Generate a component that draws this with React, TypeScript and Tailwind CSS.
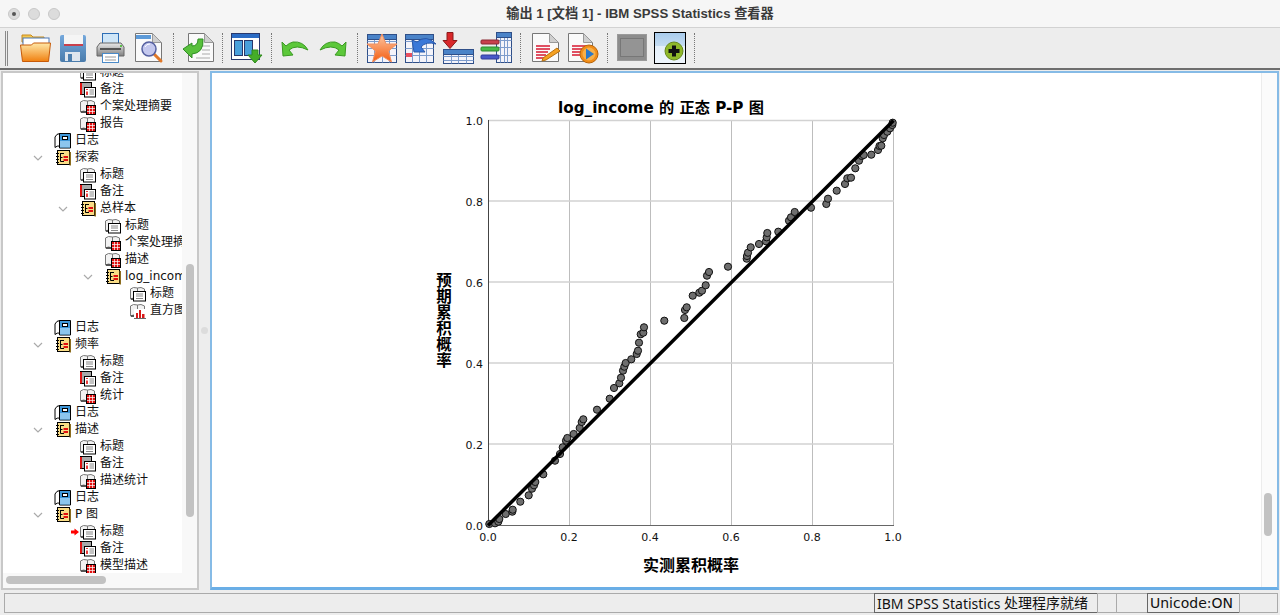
import type { ReactNode } from "react";

const cjk = "font-['DejaVu_Sans','Noto_Sans_CJK_SC',sans-serif]";

// scatter points of the P-P plot, in page pixels
const points: [number, number][] = [
  [489.3, 524], [495, 523.3], [498.3, 521.7], [499.3, 519], [505.7, 514], [512.3, 511.7], [512.7, 509.7],
  [520.3, 501.7], [528.7, 495.3], [532, 488.7], [534, 485.3], [535.3, 482], [543.3, 474.3], [555, 460.7],
  [560, 454], [562.7, 447.3], [566, 440.7], [567.3, 438], [573.7, 434], [579.7, 428], [581.7, 422],
  [583.3, 419.3], [597, 409.7], [609.7, 398.7], [614, 388], [619.3, 383.3], [621, 377.7], [623, 370.7],
  [624.3, 366.7], [625.7, 363], [631.3, 359.3], [636.7, 354], [638, 350.7], [639, 342.7], [640.7, 334.3],
  [643.3, 332.7], [644, 327.3], [664.3, 320.7], [684.3, 318], [685, 310], [686.7, 307.3], [692.7, 295.7],
  [699.3, 292.7], [702, 290.7], [705.7, 285.3], [707, 275.7], [709, 272], [728, 266.7], [746.7, 258.7],
  [747, 256], [748, 252.7], [750.7, 247.3], [759, 244], [766, 241.3], [766.7, 237.3], [767.3, 233],
  [778.3, 231.7], [789, 220.7], [791, 217.3], [794.7, 212], [811, 207.7], [826.3, 204], [828, 198.7],
  [836.7, 190.7], [845, 184], [847.3, 178.3], [851, 177.7], [855.3, 168.3], [859, 160.7], [861.7, 156],
  [863.7, 155], [871.3, 154.7], [878, 150], [879.5, 146], [881.3, 145.7], [882.7, 138.3], [884, 135],
  [887.3, 131.7], [890, 128.3], [892.3, 125], [892.7, 122.7],
];

type Kind = "log" | "folder" | "title" | "note" | "table" | "chart";

function TreeIcon({ kind }: { kind: Kind }) {
  if (kind === "log") {
    return (
      <svg className="shrink-0" width="18" height="17" viewBox="0 0 18 17">
        <path d="M1 5 Q2.500 1.500 6 1.500 V14 Q3 13.500 1 15.500Z" fill="#fff" stroke="#000" />
        <path d="M5.500 1.500 H16.500 V16 H5.500Z" fill="#3f97d8" stroke="#000" />
        <rect x="6" y="9" width="10" height="6.500" fill="#8cc6ee" />
        <rect x="8.500" y="4.500" width="5" height="3" fill="#fff" stroke="#000" />
      </svg>
    );
  }
  if (kind === "folder") {
    return (
      <svg className="shrink-0" width="18" height="17" viewBox="0 0 18 17">
        <rect x="3.500" y="1.500" width="12" height="14" fill="#f9dc86" stroke="#000" />
        <rect x="15.500" y="3" width="1.500" height="13.500" fill="#8c6d1f" />
        <path d="M2 4.500h3M2 7.500h3M2 10.500h3M2 13.500h3" stroke="#000" />
        <path d="M6.500 4V12.500M6.500 4.500h3.500M6.500 8.500h2M6.500 12.500h3.500" stroke="#000" fill="none" />
        <rect x="9.500" y="7" width="4.500" height="2" fill="#e01010" />
        <rect x="9.500" y="10" width="4.500" height="2" fill="#e01010" />
      </svg>
    );
  }
  const book = kind === "note" ? (
    <>
      <rect x="1.500" y="1.500" width="11" height="12" fill="#a8a8a8" stroke="#000" />
      <path d="M2 2V13.500" stroke="#e01010" strokeWidth="2" />
    </>
  ) : (
    <>
      <path d="M1.500 14V4Q4 1.500 8.500 3Q12 1.500 15.500 4V14Q12 12 8.500 14Q4 12 1.500 14Z" fill="#f2f2f2" stroke="#777" />
      <path d="M8.500 3V13" stroke="#777" />
      <path d="M2 14h6" stroke="#555" strokeWidth="2" />
    </>
  );
  return (
    <svg className="shrink-0" width="18" height="17" viewBox="0 0 18 17">
      {book}
      {kind === "title" && (
        <>
          <rect x="4.500" y="6.500" width="12" height="9.500" fill="#fff" stroke="#000" />
          <path d="M7 9h7M7 11h7M7 13.500h7" stroke="#888" />
        </>
      )}
      {kind === "note" && (
        <>
          <rect x="5.500" y="6.500" width="11" height="9.500" fill="#fff" stroke="#000" />
          <path d="M8 8v1M8 10.500v3.500" stroke="#e01010" strokeWidth="1.600" />
          <path d="M10.500 9h4.500M10.500 11h4.500M10.500 13h4.500" stroke="#888" />
        </>
      )}
      {kind === "table" && (
        <>
          <rect x="7.500" y="7.500" width="9" height="9" fill="#e01010" stroke="#000" />
          <path d="M10.500 8v8M13.500 8v8M8 10.500h8M8 13.500h8" stroke="#fff" strokeWidth="0.700" />
        </>
      )}
      {kind === "chart" && (
        <>
          <rect x="5" y="7" width="12" height="9.500" fill="#fff" />
          <path d="M7 11h2v5h-2zM10 8h2v8h-2zM13 12h2.500v4h-2.500z" fill="#d81818" />
          <path d="M5 16.500h12" stroke="#666" />
        </>
      )}
    </svg>
  );
}

const rows: { kind: Kind; label: string; pad: string; open?: boolean; current?: boolean }[] = [
  { kind: "title", label: "标题", pad: "pl-[79px]" },
  { kind: "note", label: "备注", pad: "pl-[79px]" },
  { kind: "table", label: "个案处理摘要", pad: "pl-[79px]" },
  { kind: "table", label: "报告", pad: "pl-[79px]" },
  { kind: "log", label: "日志", pad: "pl-[54px]" },
  { kind: "folder", label: "探索", pad: "pl-[54px]", open: true },
  { kind: "title", label: "标题", pad: "pl-[79px]" },
  { kind: "note", label: "备注", pad: "pl-[79px]" },
  { kind: "folder", label: "总样本", pad: "pl-[79px]", open: true },
  { kind: "title", label: "标题", pad: "pl-[104px]" },
  { kind: "table", label: "个案处理摘要", pad: "pl-[104px]" },
  { kind: "table", label: "描述", pad: "pl-[104px]" },
  { kind: "folder", label: "log_income", pad: "pl-[104px]", open: true },
  { kind: "title", label: "标题", pad: "pl-[129px]" },
  { kind: "chart", label: "直方图", pad: "pl-[129px]" },
  { kind: "log", label: "日志", pad: "pl-[54px]" },
  { kind: "folder", label: "频率", pad: "pl-[54px]", open: true },
  { kind: "title", label: "标题", pad: "pl-[79px]" },
  { kind: "note", label: "备注", pad: "pl-[79px]" },
  { kind: "table", label: "统计", pad: "pl-[79px]" },
  { kind: "log", label: "日志", pad: "pl-[54px]" },
  { kind: "folder", label: "描述", pad: "pl-[54px]", open: true },
  { kind: "title", label: "标题", pad: "pl-[79px]" },
  { kind: "note", label: "备注", pad: "pl-[79px]" },
  { kind: "table", label: "描述统计", pad: "pl-[79px]" },
  { kind: "log", label: "日志", pad: "pl-[54px]" },
  { kind: "folder", label: "P 图", pad: "pl-[54px]", open: true },
  { kind: "title", label: "标题", pad: "pl-[79px]", current: true },
  { kind: "note", label: "备注", pad: "pl-[79px]" },
  { kind: "table", label: "模型描述", pad: "pl-[79px]" },
];

function TreeRow({ row }: { row: (typeof rows)[number] }) {
  return (
    <div className={`relative flex h-[17px] w-[300px] items-center whitespace-nowrap text-[12px] leading-[17px] text-[#111] ${row.pad}`}>
      <span className="relative flex w-0 items-center">
        {row.open && (
          <svg className="absolute left-[-21px] top-[-3px]" width="10" height="6" viewBox="0 0 10 6">
            <path d="M1 1l4 4 4-4" fill="none" stroke="#aaa" strokeWidth="1.200" />
          </svg>
        )}
        {row.current && (
          <svg className="absolute left-[-8px] top-[-4px]" width="8" height="8" viewBox="0 0 8 8">
            <path d="M0 2.500h3.500V0.500L8 4 3.500 7.500V5.500H0Z" fill="#f00" />
          </svg>
        )}
      </span>
      <TreeIcon kind={row.kind} />
      <span className="ml-[3px]">{row.label}</span>
    </div>
  );
}

const Page = ({ x = 2, w = 26, h = 30 }: { x?: number; w?: number; h?: number }) => (
  <>
    <path d={`M${x + 0.5} 1.500h${w - 9}l9 9v${h - 10}h-${w}z`} fill="#fafafa" stroke="#777" />
    <path d={`M${x + w - 8.5} 1.500v9h9z`} fill="#cfcfcf" stroke="#999" />
  </>
);

const Grid = ({ x, y, w, h }: { x: number; y: number; w: number; h: number }) => {
  const lines = [];
  for (let i = 1; i < 4; i++) lines.push(<path key={`v${i}`} d={`M${x + Math.round((w * i) / 4)} ${y}v${h}`} stroke="#7d9ccc" />);
  for (let i = 1; i < 4; i++) lines.push(<path key={`h${i}`} d={`M${x} ${y + Math.round((h * i) / 4)}h${w}`} stroke="#7d9ccc" />);
  return (
    <>
      <rect x={x} y={y} width={w} height={h} fill="#f4f4fa" stroke="#2f4f88" />
      {lines}
      <rect x={x} y={y} width={w} height="5" fill="#4a83c8" stroke="#2f4f88" />
    </>
  );
};

const arrowPath = "M3 10L4 24L14 23L10 18Q17 12 29 18Q24 9 14 10Q10 11 7 14Z";

const tools: { ml: string; icon: ReactNode }[] = [
  {
    ml: "ml-[11px]",
    icon: (
      <svg width="32" height="32" viewBox="0 0 32 32">
        <defs>
          <linearGradient id="fo" x1="0" y1="0" x2="0" y2="1">
            <stop offset="0" stopColor="#ffe8a8" />
            <stop offset="1" stopColor="#f08010" />
          </linearGradient>
        </defs>
        <path d="M3 10V3h9l2 2h11v8z" fill="#f4c850" stroke="#c98a1a" />
        <rect x="4" y="6" width="26" height="10" fill="#fff" stroke="#4b78b8" />
        <path d="M1.500 13h11l2-2h17l-2 18.500H3.500z" fill="url(#fo)" stroke="#c75a08" />
      </svg>
    ),
  },
  {
    ml: "ml-[7px]",
    icon: (
      <svg width="32" height="32" viewBox="0 0 32 32">
        <defs>
          <linearGradient id="sv" x1="0" y1="0" x2="0" y2="1">
            <stop offset="0" stopColor="#74a8dc" />
            <stop offset="1" stopColor="#4a7cac" />
          </linearGradient>
        </defs>
        <rect x="2" y="3" width="26" height="27" rx="2" fill="url(#sv)" />
        <rect x="6" y="3" width="19" height="11" fill="#f5f5f5" />
        <rect x="6" y="12" width="19" height="2" fill="#c8404c" />
        <rect x="7" y="20" width="15" height="9" fill="#dfe6ee" />
        <rect x="10" y="22" width="4" height="7" fill="#4d7faf" />
      </svg>
    ),
  },
  {
    ml: "ml-[5px]",
    icon: (
      <svg width="32" height="32" viewBox="0 0 32 32">
        <defs>
          <linearGradient id="pr" x1="0" y1="0" x2="0" y2="1">
            <stop offset="0" stopColor="#eaeaea" />
            <stop offset="1" stopColor="#808080" />
          </linearGradient>
        </defs>
        <rect x="7.500" y="1.500" width="16" height="11" fill="#cfe6f8" stroke="#2d6db5" />
        <path d="M5 11h21l3 4v9H2v-9z" fill="url(#pr)" stroke="#666" />
        <rect x="5" y="16" width="21" height="2" fill="#555" />
        <rect x="25" y="13" width="2" height="2" fill="#5cc04a" />
        <rect x="7.500" y="21.500" width="16" height="9" fill="#fff" stroke="#4a8ac8" />
        <path d="M10 25h11M10 28h11" stroke="#999" />
      </svg>
    ),
  },
  {
    ml: "ml-[6px]",
    icon: (
      <svg width="32" height="32" viewBox="0 0 32 32">
        <Page x={2} w={26} h={29} />
        <rect x="3" y="3" width="15" height="4" fill="#5c9ad8" />
        <path d="M21 22l7 7" stroke="#e07828" strokeWidth="3" strokeLinecap="round" />
        <circle cx="16" cy="17" r="7" fill="#c4c8ee" stroke="#5560a0" strokeWidth="1.500" />
        <path d="M12 15a5 5 0 0 1 5-3" stroke="#fff" fill="none" />
      </svg>
    ),
  },
  {
    ml: "ml-[8px]",
    icon: (
      <svg width="32" height="32" viewBox="0 0 32 32">
        <Page x={6} w={25} h={29} />
        <path d="M18 14h10M20 18h8M20 22h8M14 26h14" stroke="#aaa" />
        <path d="M1 17l9-6v3q6 0 6-7h5q1 14-11 15v4z" fill="#58c03c" stroke="#2f8f24" />
      </svg>
    ),
  },
  {
    ml: "ml-[8px]",
    icon: (
      <svg width="32" height="32" viewBox="0 0 32 32">
        <rect x="0.500" y="1.500" width="28" height="26" fill="#fff" stroke="#28386c" />
        <rect x="1" y="2" width="27" height="4" fill="#2a6bc4" />
        <rect x="3.500" y="8.500" width="8" height="15" fill="#48a0dc" stroke="#28386c" />
        <rect x="13.500" y="8.500" width="8" height="15" fill="#48a0dc" stroke="#28386c" />
        <path d="M21 18h6v5h4l-7 8-7-8h4z" fill="#45ad28" stroke="#2f8a1c" />
      </svg>
    ),
  },
  {
    ml: "ml-[7px]",
    icon: (
      <svg width="32" height="32" viewBox="0 0 32 32">
        <path d={arrowPath} fill="#5cc83a" stroke="#3a9a22" />
      </svg>
    ),
  },
  {
    ml: "ml-[6px]",
    icon: (
      <svg width="32" height="32" viewBox="0 0 32 32">
        <g transform="translate(32 0) scale(-1 1)">
          <path d={arrowPath} fill="#5cc83a" stroke="#3a9a22" />
        </g>
      </svg>
    ),
  },
  {
    ml: "ml-[8px]",
    icon: (
      <svg width="32" height="32" viewBox="0 0 32 32">
        <defs>
          <linearGradient id="st" x1="0" y1="0" x2="0" y2="1">
            <stop offset="0" stopColor="#fcc8a4" />
            <stop offset="1" stopColor="#f45c10" />
          </linearGradient>
        </defs>
        <Grid x={1.5} y={2.5} w={29} h={28} />
        <path d="M16 2l4 10h11l-8.500 7 3 11-9.500-6-9.500 6 3-11-8.500-7h11z" fill="url(#st)" stroke="#f09060" />
      </svg>
    ),
  },
  {
    ml: "ml-[6px]",
    icon: (
      <svg width="32" height="32" viewBox="0 0 32 32">
        <Grid x={1.5} y={2.5} w={28} h={28} />
        <rect x="2" y="21" width="6" height="4" fill="#e85060" />
        <path d="M32 12Q22 2 13 10L8 8L10 20L21 20L17 15Q22 9 32 12Z" fill="#3a78d8" stroke="#2a58a8" />
      </svg>
    ),
  },
  {
    ml: "ml-[6px]",
    icon: (
      <svg width="32" height="32" viewBox="0 0 32 32">
        <Grid x={1.5} y={17.5} w={30} h={14} />
        <path d="M5 0.500h6v8h4l-7 8-7-8h4z" fill="#d8282a" stroke="#8a1a1a" />
      </svg>
    ),
  },
  {
    ml: "ml-[6px]",
    icon: (
      <svg width="32" height="32" viewBox="0 0 32 32">
        <Grid x={16.5} y={0.5} w={15} h={30} />
        <rect x="1" y="8" width="18" height="4" rx="1" fill="#c8404c" stroke="#8a2830" />
        <rect x="1" y="15" width="18" height="4" rx="1" fill="#48b848" stroke="#2c8a2c" />
        <rect x="1" y="23" width="18" height="4" rx="1" fill="#4858c8" stroke="#303c98" />
      </svg>
    ),
  },
  {
    ml: "ml-[9px]",
    icon: (
      <svg width="32" height="32" viewBox="0 0 32 32">
        <Page x={2} w={26} h={29} />
        <path d="M6 14h14M6 17h14M6 20h12M6 23h10M6 26h12" stroke="#d81830" strokeWidth="1.500" />
        <path d="M13 26l14-10 3 3-14 9-4 1z" fill="#f4a020" stroke="#b87010" />
      </svg>
    ),
  },
  {
    ml: "ml-[5px]",
    icon: (
      <svg width="32" height="32" viewBox="0 0 32 32">
        <Page x={1} w={24} h={29} />
        <path d="M5 14h14M5 17h14M5 20h12M5 23h8" stroke="#d81830" strokeWidth="1.500" />
        <circle cx="22" cy="22" r="9" fill="#f08c18" stroke="#b86408" />
        <circle cx="22" cy="22" r="6.500" fill="#f8b048" />
        <path d="M19 16.500l8 5.500-8 5.500z" fill="#2a78c8" />
      </svg>
    ),
  },
  {
    ml: "ml-[8px]",
    icon: (
      <svg width="32" height="32" viewBox="0 0 32 32">
        <rect x="1.500" y="2.500" width="29" height="26" fill="#8c8c8c" stroke="#9a9a9a" />
        <rect x="4.500" y="6.500" width="23" height="18" fill="#949494" stroke="#777" />
      </svg>
    ),
  },
  {
    ml: "ml-[6px]",
    icon: (
      <svg width="32" height="32" viewBox="0 0 32 32">
        <defs>
          <linearGradient id="ac" x1="0" y1="0" x2="0" y2="1">
            <stop offset="0" stopColor="#a8cbec" />
            <stop offset="0.420" stopColor="#c4dcf2" />
            <stop offset="0.430" stopColor="#e4effa" />
            <stop offset="1" stopColor="#eef5fc" />
          </linearGradient>
        </defs>
        <rect x="0.500" y="0.500" width="31" height="31" fill="url(#ac)" stroke="#000" />
        <circle cx="20" cy="19" r="9" fill="#8fb82a" stroke="#66881c" />
        <path d="M18 13.500h4v3.500h3.500v4H22v3.500h-4V21h-3.500v-4H18z" fill="#111" />
      </svg>
    ),
  },
];

const seps = new Set([3, 4, 5, 7, 11, 13, 15]);

function Sep() {
  return <div className="ml-[8px] h-[30px] w-px shrink-0 border-l border-dotted border-[#777]" />;
}

export default function App() {
  return (
    <div className={`flex h-[615px] w-[1280px] flex-col overflow-hidden bg-[#ededed] ${cjk}`}>
      {/* title bar */}
      <div className="relative flex h-[28px] items-center border-b border-[#d2d2d2] bg-[#f6f6f6] pl-[8px]">
        <div className="flex gap-[8px]">
          <span className="flex h-[12px] w-[12px] items-center justify-center rounded-full border border-[#c8c8c8] bg-[#dcdcdc]">
            <span className="h-[4px] w-[4px] rounded-full bg-[#555]" />
          </span>
          <span className="h-[12px] w-[12px] rounded-full border border-[#c8c8c8] bg-[#dcdcdc]" />
          <span className="h-[12px] w-[12px] rounded-full border border-[#c8c8c8] bg-[#dcdcdc]" />
        </div>
        <div className="flex-1 pr-[60px] text-center font-['Liberation_Sans','Noto_Sans_CJK_SC',sans-serif] text-[13.200px] font-bold text-[#3a3a3a]">
          输出 1 [文档 1] - IBM SPSS Statistics 查看器
        </div>
      </div>

      {/* toolbar */}
      <div className="flex h-[42px] items-center border-b-2 border-[#6e6e6e] bg-[#ededed] pl-[5px]">
        <div className="h-[35px] w-[3px] shrink-0 border-x border-[#8a8a8a]" />
        {tools.map((t, i) => (
          <div key={i} className="contents">
            <div className={t.ml}>{t.icon}</div>
            {seps.has(i) && <Sep />}
          </div>
        ))}
      </div>

      {/* panes */}
      <div className="flex min-h-0 flex-1 pb-[1px] pr-[1px]">
        <div className="ml-px mt-[1px] flex w-[198px] flex-col border-2 border-[#c8c8c8] bg-white">
          <div className="flex min-h-0 flex-1">
            <div className="w-[179px] overflow-hidden">
              <div className="-mt-[9px] ml-[-3px]">
                {rows.map((r, i) => (
                  <TreeRow key={i} row={r} />
                ))}
              </div>
            </div>
            <div className="w-[15px] bg-[#f8f8f8] pl-[4px] pt-[191px]">
              <div className="h-[253px] w-[8px] rounded-full bg-[#c2c2c2]" />
            </div>
          </div>
          <div className="h-[15px] bg-[#f8f8f8] pl-[3px] pt-[3px]">
            <div className="h-[8px] w-[100px] rounded-full bg-[#c2c2c2]" />
          </div>
        </div>

        <div className="flex w-[11px] items-center justify-center bg-[#ededed]">
          <span className="h-[7px] w-[7px] rounded-full bg-[#dcdcdc]" />
        </div>

        <div className="mt-[1px] flex min-w-0 flex-1 border-x-2 border-b-[3px] border-t-2 border-[#86bbe6] border-b-[#6aaee6] bg-white">
          <div className="min-w-0 flex-1 pl-[218px] pt-[22px]">
            <svg width="480" height="485" viewBox="430 95 480 485">
              <g stroke="#bdbdbd">
                {[569.5, 650.5, 731.5, 812.5, 893.5].map((x) => (
                  <line key={x} x1={x} x2={x} y1="120" y2="525" />
                ))}
              </g>
              <g stroke="#d2d2d2" strokeWidth="1.400">
                {[120.5, 201, 282, 363, 444].map((y) => (
                  <line key={y} x1="488" x2="894" y1={y} y2={y} />
                ))}
              </g>
              <line x1="488.500" x2="488.500" y1="120" y2="526" stroke="#444" />
              <line x1="488" x2="894" y1="525.500" y2="525.500" stroke="#666" />
              {points.map(([x, y], i) => (
                <circle key={i} cx={x} cy={y} r="3.600" fill="#6e6e6e" stroke="#111" strokeWidth="1" />
              ))}
              <line x1="488" y1="525.500" x2="893.500" y2="120.500" stroke="#000" strokeWidth="3.500" />

              <text x="661" y="113" textAnchor="middle" fontSize="15.200" fontWeight="700" fill="#000">
                log_income 的 正态 P-P 图
              </text>
              <g fontSize="11" fill="#111" textAnchor="end">
                {["1.0", "0.8", "0.6", "0.4", "0.2", "0.0"].map((t, i) => (
                  <text key={t} x="483" y={124.500 + i * 81}>
                    {t}
                  </text>
                ))}
              </g>
              <g fontSize="11" fill="#111" textAnchor="middle">
                {["0.0", "0.2", "0.4", "0.6", "0.8", "1.0"].map((t, i) => (
                  <text key={t} x={488 + i * 81} y="541">
                    {t}
                  </text>
                ))}
              </g>
              <g fontSize="15.500" fontWeight="700" fill="#000" textAnchor="middle">
                {"预期累积概率".split("").map((c, i) => (
                  <text key={i} x="444" y={286 + i * 16}>
                    {c}
                  </text>
                ))}
              </g>
              <text x="691" y="571" textAnchor="middle" fontSize="16" fontWeight="700" fill="#000">
                实测累积概率
              </text>
            </svg>
          </div>
          <div className="w-[16px] border-l border-[#ececec] bg-[#fbfbfb] pl-[2px] pt-[420px]">
            <div className="h-[43px] w-[8px] rounded-full bg-[#c2c2c2]" />
          </div>
        </div>
      </div>

      {/* status bar */}
      <div className="flex h-[24px] shrink-0 items-center pl-[4px] text-[14px] text-[#111]">
        <div className="h-[20px] w-[870px] border-y border-l border-[#aaa]" />
        <div className="flex h-[20px] w-[223px] items-center whitespace-nowrap border-y border-l border-[#666] pl-[2px]">
          <span className="font-['Noto_Sans',sans-serif]">IBM SPSS Statistics&nbsp;</span>
          <span>处理程序就绪</span>
        </div>
        <div className="h-[20px] w-[19px] border-y border-l border-[#aaa]" />
        <div className="h-[20px] w-[31px] border-y border-l border-[#aaa]" />
        <div className="flex h-[20px] w-[92px] items-center whitespace-nowrap border-y border-l border-[#666] pl-[2px]">
          Unicode:ON
        </div>
        <div className="h-[20px] w-[39px] border border-[#aaa]" />
      </div>
    </div>
  );
}
